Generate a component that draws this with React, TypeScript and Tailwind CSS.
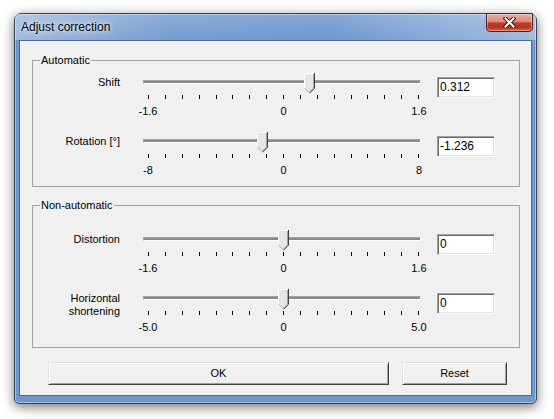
import React from 'react';

type SliderProps = {
    min: number;
    max: number;
    value: number;
    labels: [string, string, string];
};

// Classic Win32 trackbar: 278px channel, 17 ticks spread over 270px
function Trackbar({ min, max, value, labels }: SliderProps) {
    const pos = 5 + ((value - min) / (max - min)) * 270;

    return (
        <div className="relative flex flex-col w-[278px] h-[49px]">
            {/* channel */}
            <div className="mt-[8px] h-[4px] border-t border-l border-[#a0a0a0] border-b border-r border-b-white border-r-white bg-[#8a8a8a]" />

            {/* ticks */}
            <div className="mt-[11px] flex justify-between pl-[5px] pr-[2px]">
                {Array.from({ length: 17 }).map((_, i) => (
                    <div key={i} className="w-px h-[4px] bg-black" />
                ))}
            </div>

            {/* tick labels */}
            <div className="mt-[6px] -ml-[10px] -mr-[13px] flex justify-between leading-[13px]">
                {labels.map((l, i) => (
                    <span key={i} className="w-[30px] text-center">{l}</span>
                ))}
            </div>

            {/* thumb */}
            <svg
                className="absolute top-[1px]"
                style={{ left: pos - 5 }}
                width="11"
                height="21"
                viewBox="0 0 11 21"
            >
                <path d="M0 0H11V15L5.5 20.5L0 15Z" fill="#e6e6e6" />
                <polyline points="0.5,15 0.5,0.5 10,0.5" fill="none" stroke="#ffffff" />
                <polyline points="0.5,15.2 5.2,19.8" fill="none" stroke="#b0b0b0" />
                <polyline points="9.5,1 9.5,15 5.5,19" fill="none" stroke="#a0a0a0" />
                <polyline points="10.5,0 10.5,15.2 5.5,20.3" fill="none" stroke="#404040" />
            </svg>
        </div>
    );
}

type RowProps = SliderProps & {
    label: React.ReactNode;
    text: string;
};

function Row({ label, text, ...slider }: RowProps) {
    return (
        <div className="flex items-start">
            <div className="w-[87px] mt-[4px] text-right leading-[13px]">{label}</div>
            <div className="ml-[23px]">
                <Trackbar {...slider} />
            </div>
            <div className="ml-[16px] mt-[5px] w-[58px] h-[21px] bg-white border border-t-[#a0a0a0] border-l-[#a0a0a0] border-r-white border-b-white shadow-[inset_1px_1px_0_#696969,inset_-1px_-1px_0_#e3e3e3] pl-[2px] pt-[3px] text-[12px] leading-[13px]">
                {text}
            </div>
        </div>
    );
}

function GroupBox({ title, className, children }: { title: string; className: string; children: React.ReactNode }) {
    return (
        <fieldset className={`ml-[12px] w-[488px] border border-[#a0a0a0] flex flex-col ${className}`}>
            <legend className="ml-[7px] px-[1px] leading-[13px]">{title}</legend>
            {children}
        </fieldset>
    );
}

export default function App() {
    return (
        <div className="w-[554px] h-[419px] bg-white pl-[14px] pt-[13px] text-[11px] text-black font-['Liberation_Sans',Arial,sans-serif]">
            <div className="relative flex flex-col w-[523px] h-[391px] px-[4px] pb-[7px] rounded-t-[7px] rounded-b-[5px] border border-[#33455c] bg-[linear-gradient(180deg,#86a8d8_0px,#6f96cc_26px,#6e95cc_100%)] shadow-[0_3px_12px_rgba(0,0,0,0.55),inset_0_0_0_1px_rgba(255,255,255,0.4)]">
                {/* title bar */}
                <div className="h-[26px] leading-[26px] text-[12px] bg-[linear-gradient(90deg,rgba(255,255,255,0.35)_0%,rgba(255,255,255,0.05)_30%,rgba(255,255,255,0)_60%,rgba(255,255,255,0.35)_100%)] -mx-[4px] px-[6px]">
                    <span className="[text-shadow:0_0_8px_rgba(255,255,255,0.95),0_0_3px_rgba(255,255,255,0.8)]">Adjust correction</span>
                </div>

                {/* close button */}
                <button className="absolute -top-px right-[3px] w-[47px] h-[19px] flex items-center justify-center rounded-b-[4px] border border-[#5a1e16] bg-[linear-gradient(180deg,#eab0a6_0%,#d8887c_45%,#c4402f_52%,#b8311f_78%,#d7674a_100%)] shadow-[inset_0_0_0_1px_rgba(255,255,255,0.35)]">
                    <svg width="13" height="11" viewBox="0 0 13 11">
                        <path d="M2.5 1.5L10.5 9.5M10.5 1.5L2.5 9.5" stroke="#3b1510" strokeWidth="4" strokeLinecap="square" />
                        <path d="M2.5 1.5L10.5 9.5M10.5 1.5L2.5 9.5" stroke="#ffffff" strokeWidth="2" strokeLinecap="square" />
                    </svg>
                </button>

                {/* client area */}
                <div className="flex-1 flex flex-col border border-[#4d6b96] bg-[#f0f0f0]">
                    <GroupBox title="Automatic" className="mt-[13px] pb-[6px]">
                        <div className="mt-[5px] flex flex-col gap-[10px]">
                            <Row label="Shift" text="0.312" min={-1.6} max={1.6} value={0.312} labels={['-1.6', '0', '1.6']} />
                            <Row label="Rotation [°]" text="-1.236" min={-8} max={8} value={-1.236} labels={['-8', '0', '8']} />
                        </div>
                    </GroupBox>

                    <GroupBox title="Non-automatic" className="mt-[12px] pb-[10px]">
                        <div className="mt-[17px] flex flex-col gap-[10px]">
                            <Row label="Distortion" text="0" min={-1.6} max={1.6} value={0} labels={['-1.6', '0', '1.6']} />
                            <Row
                                label={<>Horizontal<br />shortening</>}
                                text="0"
                                min={-5}
                                max={5}
                                value={0}
                                labels={['-5.0', '0', '5.0']}
                            />
                        </div>
                    </GroupBox>

                    <div className="mt-[14px] ml-[28px] flex gap-[13px]">
                        <button className="w-[341px] h-[23px] bg-[#f0f0f0] border border-t-[#e3e3e3] border-l-[#e3e3e3] border-r-[#404040] border-b-[#404040] shadow-[inset_1px_1px_0_#ffffff,inset_-1px_-1px_0_#a0a0a0]">
                            OK
                        </button>
                        <button className="w-[105px] h-[23px] bg-[#f0f0f0] border border-t-[#e3e3e3] border-l-[#e3e3e3] border-r-[#404040] border-b-[#404040] shadow-[inset_1px_1px_0_#ffffff,inset_-1px_-1px_0_#a0a0a0]">
                            Reset
                        </button>
                    </div>
                </div>
            </div>
        </div>
    );
}
